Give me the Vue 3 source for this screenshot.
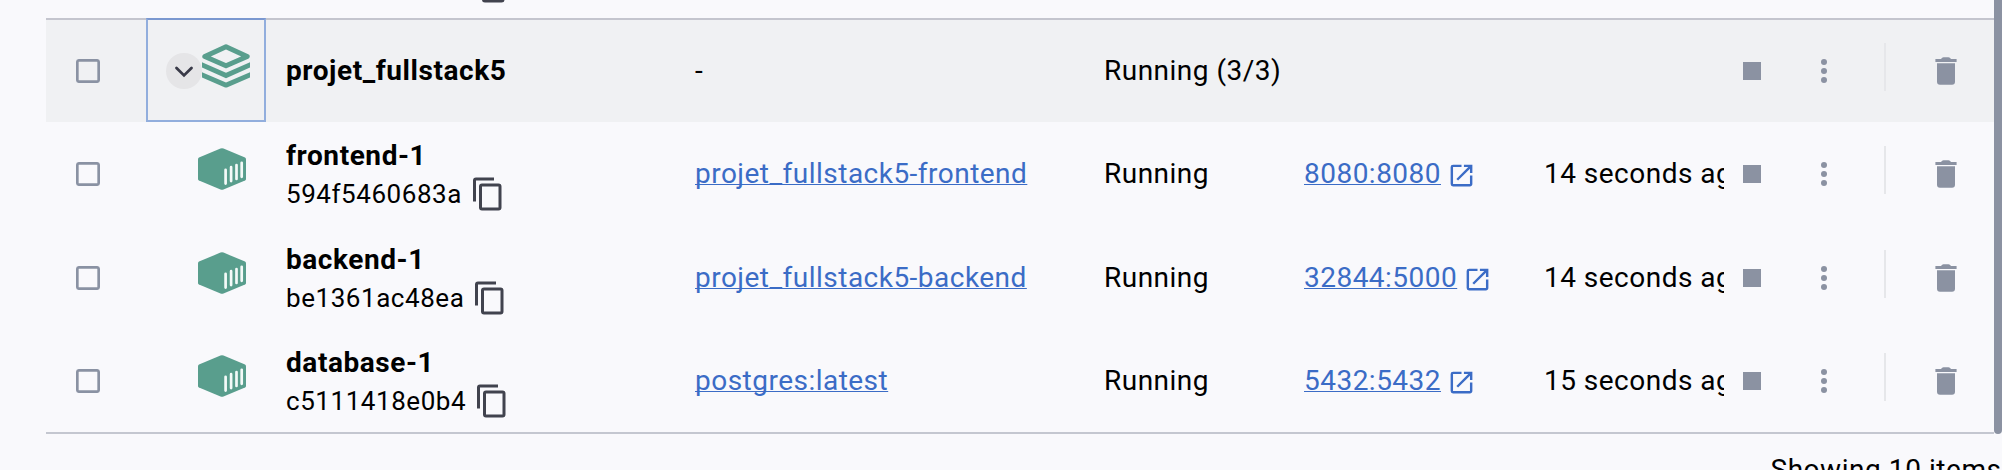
<script setup>
const rows = [
  { name: 'frontend-1', id: '594f5460683a', image: 'projet_fullstack5-frontend', port: '8080:8080', started: '14 seconds ago' },
  { name: 'backend-1', id: 'be1361ac48ea', image: 'projet_fullstack5-backend', port: '32844:5000', started: '14 seconds ago' },
  { name: 'database-1', id: 'c5111418e0b4', image: 'postgres:latest', port: '5432:5432', started: '15 seconds ago' }
]
const all = [{ group: true, name: 'projet_fullstack5' }, ...rows]
</script>

<template>
  <div class="page">
    <div class="previous">
      <svg class="copy previous-copy" viewBox="0 0 24 24"><path d="M16 1H4a2 2 0 0 0-2 2v14h2V3h12V1zm3 4H8a2 2 0 0 0-2 2v14a2 2 0 0 0 2 2h11a2 2 0 0 0 2-2V7a2 2 0 0 0-2-2zm0 16H8V7h11v14z" /></svg>
    </div>
    <div class="table">
      <div v-for="(r, i) in all" :key="i" class="row" :class="{ group: r.group }">
        <div class="check">
          <svg width="24" height="24" viewBox="0 0 24 24"><rect x="1.33" y="1.33" width="21.34" height="21.34" rx="1.6" fill="none" stroke="#8a92a3" stroke-width="2.67" /></svg>
        </div>
        <div class="icon-cell" :class="{ focused: r.group }">
          <template v-if="r.group">
            <span class="chevron">
              <svg width="36" height="36" viewBox="0 0 36 36"><path d="M10.5 15l7.5 7.4 7.5-7.4" fill="none" stroke="#393a48" stroke-width="2.8" stroke-linecap="round" /></svg>
            </span>
            <svg class="stack" width="48" height="44" viewBox="0 0 48 44">
              <path d="M24 2.8L45.2 12.5L24 21.8L2.8 12.5Z" fill="none" stroke="#599e8d" stroke-width="5" stroke-linejoin="round" />
              <path d="M0 18.2L24 28.8L48 18.2V23.6L24 34.2L0 23.6ZM0 28.2L24 38.6L48 28.2V33.6L25.5 43.2Q24 43.9 22.5 43.2L0 33.6Z" fill="#599e8d" />
            </svg>
          </template>
          <svg v-else class="container" width="48" height="42" viewBox="0 0 48 42">
            <path d="M22.5.6Q24 0 25.5.6L47 9.6Q48 10.2 48 11.2V31Q48 32 47 32.5L25.5 41.4Q24 42 22.5 41.4L1 32.5Q0 32 0 31V11.2Q0 10.2 1 9.6Z" fill="#599e8d" />
            <path d="M27.6 21.8V35.6M33.1 19.2V33.1M38.5 17V30.9M43.7 14.8V28.8" stroke="#f4faf8" stroke-width="2.7" stroke-linecap="round" />
          </svg>
        </div>
        <div class="name-cell">
          <div class="name">{{ r.name }}</div>
          <div v-if="r.id" class="id">
            <span>{{ r.id }}</span>
            <svg class="copy" viewBox="0 0 24 24"><path d="M16 1H4a2 2 0 0 0-2 2v14h2V3h12V1zm3 4H8a2 2 0 0 0-2 2v14a2 2 0 0 0 2 2h11a2 2 0 0 0 2-2V7a2 2 0 0 0-2-2zm0 16H8V7h11v14z" /></svg>
          </div>
        </div>
        <div class="cell"><a v-if="r.image" class="link">{{ r.image }}</a><span v-else>-</span></div>
        <div class="cell">{{ r.group ? 'Running (3/3)' : 'Running' }}</div>
        <div class="cell port">
          <template v-if="r.port">
            <a class="link">{{ r.port }}</a>
            <svg class="open" viewBox="0 0 24 24"><path d="M19 19H5V5h7V3H5a2 2 0 0 0-2 2v14a2 2 0 0 0 2 2h14c1.1 0 2-.9 2-2v-7h-2v7zM14 3v2h3.59l-9.83 9.83 1.41 1.41L19 6.41V10h2V3h-7z" /></svg>
          </template>
        </div>
        <div class="cell started">{{ r.started }}</div>
        <div class="actions">
          <span class="stop"></span>
          <svg class="more" width="6" height="24" viewBox="0 0 6 24"><circle cx="3" cy="3" r="3" /><circle cx="3" cy="12" r="3" /><circle cx="3" cy="21" r="3" /></svg>
          <span class="divider"></span>
          <svg class="trash" width="22" height="28" viewBox="0 0 22 28"><path d="M0.4 2H6Q7 0.2 8.5 0.2H13.5Q15 0.2 16 2H21.6V5H0.4ZM2 6.2H20V24.8Q20 27.8 17 27.8H5Q2 27.8 2 24.8Z" /></svg>
        </div>
      </div>
      <div class="scrollbar"></div>
    </div>
    <div class="footer">Showing 10 items</div>
  </div>
</template>

<style>
body { background: #f9f9fc; overflow: hidden; }
</style>

<style scoped>
.page {
  position: relative;
  width: 2002px;
  height: 470px;
  overflow: hidden;
  background: #f9f9fc;
  color: #000;
  font-family: Roboto, sans-serif;
  font-size: 28px;
  letter-spacing: 0.48px;
  line-height: 40px;
}
.previous { height: 18px; overflow: hidden; }
.previous-copy { display: block; margin: -32px 0 0 473px; }
.table { margin-left: 46px; width: 1948px; border-bottom: 2px solid #c4c7d0; }
.row {
  display: grid;
  grid-template-columns: 100px 140px 409px 409px 200px 240px 180px 270px;
  grid-template-rows: 100%;
  height: 104px;
  align-items: center;
}
.row:nth-child(4) { height: 102px; }
.group { box-sizing: border-box; border-top: 2px solid #c4c5ce; background: #f0f1f3; }
.check { padding-left: 30px; display: flex; }
.icon-cell { box-sizing: border-box; width: 120px; display: flex; align-items: center; padding-left: 52px; }
.icon-cell.focused { height: 104px; border: 2px solid #92aedd; border-top-color: #7b98d0; margin-top: -2px; padding-left: 18px; align-items: flex-start; }
.chevron { width: 36px; height: 36px; border-radius: 50%; background: #e5e5e7; margin-top: 33px; }
.chevron svg { display: block; }
.stack { margin-top: 24px; }
.container { margin-bottom: 10px; }
.name { font-weight: 700; line-height: 40px; letter-spacing: 0.57px; }
.id { display: flex; align-items: center; height: 38px; font-size: 26px; line-height: 38px; letter-spacing: 0.55px; }
.name:not(:last-child) { position: relative; top: 1px; }
.copy { width: 36px; height: 36px; fill: #41434e; }
.id .copy { margin-left: 8px; }
.cell { white-space: nowrap; }
.port { display: flex; align-items: center; }
.link { color: #3b6cc6; text-decoration: underline; text-decoration-thickness: 1px; text-underline-offset: 1px; text-decoration-skip-ink: none; }
.open { width: 29px; height: 29px; margin: 3px 0 0 6px; fill: #3b6cc6; }
.started { overflow: hidden; }
.actions { display: flex; align-items: center; padding-left: 19px; }
.stop { width: 18px; height: 18px; background: #8b92a2; }
.more { margin-left: 60px; fill: #8b92a2; }
.divider { width: 2px; height: 48px; margin: -8px 0 0 57px; background: #e6e7ea; }
.trash { margin-left: 49px; fill: #8b92a2; }
.scrollbar { position: absolute; left: 1994px; top: 0; width: 8px; height: 434px; border-radius: 0 0 4px 4px; background: #8b92a2; }
.footer { height: 36px; overflow: hidden; text-align: right; padding: 16px 0.5px 0 0; box-sizing: border-box; white-space: nowrap; letter-spacing: 0.55px; }
</style>
